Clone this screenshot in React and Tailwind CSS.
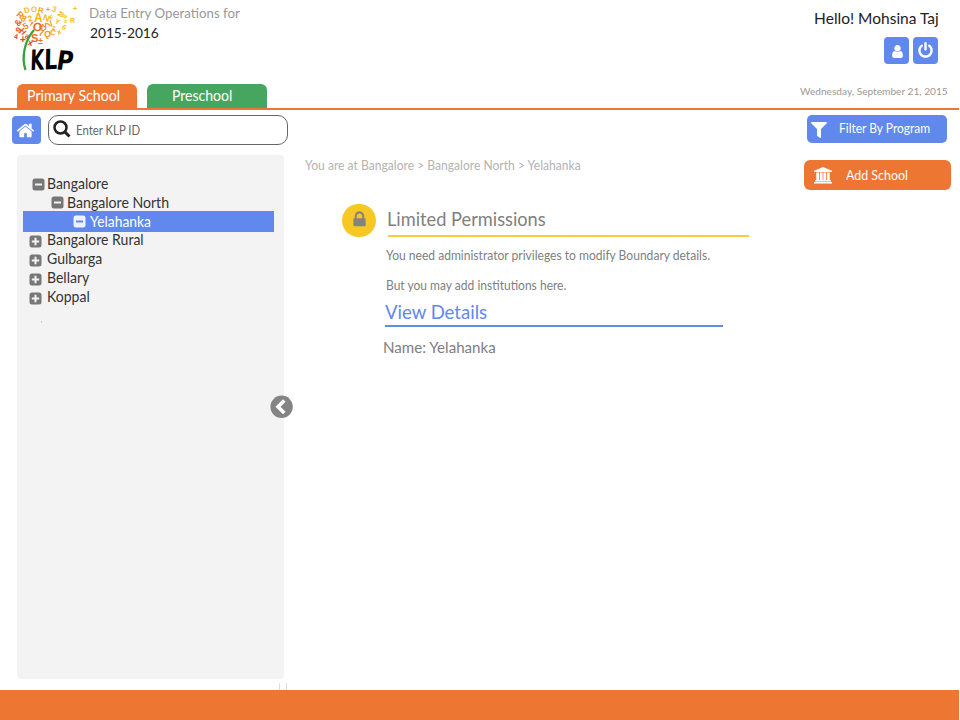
import React from "react";
import { FaFilter } from "react-icons/fa";

const HOME = "M1472 992v480q0 26-19 45t-45 19h-384v-384h-256v384h-384q-26 0-45-19t-19-45v-480q0-1 .5-3t.5-3l575-474 575 474q1 2 1 6zm223-69l-62 74q-8 9-21 11h-3q-13 0-21-7l-692-577-692 577q-12 8-24 7-13-2-21-11l-62-74q-8-10-7-23.5t11-21.5l719-599q32-26 76-26t76 26l244 204v-195q0-14 9-23t23-9h192q14 0 23 9t9 23v408l219 182q10 8 11 21.5t-7 23.5z";
const USER = "M1536 1399q0 109-62.5 187t-150.5 78h-854q-88 0-150.5-78t-62.5-187q0-85 8.5-160.5t31.5-152 58.5-131 94-89 134.5-34.5q131 128 313 128t313-128q76 0 134.5 34.5t94 89 58.5 131 31.5 152 8.5 160.5zm-256-887q0 159-112.5 271.5t-271.5 112.5-271.5-112.5-112.5-271.5 112.5-271.5 271.5-112.5 271.5 112.5 112.5 271.5z";
const LOCK = "M640 768h512v-192q0-106-75-181t-181-75-181 75-75 181v192zm832 96v576q0 40-28 68t-68 28h-960q-40 0-68-28t-28-68v-576q0-40 28-68t68-28h32v-192q0-184 132-316t316-132 316 132 132 316v192h32q40 0 68 28t28 68z";
const POWER = "M1664 896q0 156-61 298t-164 245-245 164-298 61-298-61-245-164-164-245-61-298q0-182 80.5-343t226.5-270q43-32 95.5-25t83.5 50q32 42 24.5 94.5t-49.5 84.5q-98 74-151.5 181t-53.5 228q0 104 40.5 198.5t109.5 163.5 163.5 109.5 198.5 40.5 198.5-40.5 163.5-109.5 109.5-163.5 40.5-198.5q0-121-53.5-228t-151.5-181q-42-32-49.5-84.5t24.5-94.5q31-43 84-50t95 25q146 109 226.5 270t80.5 343zm-640-768v640q0 52-38 90t-90 38-90-38-38-90v-640q0-52 38-90t90-38 90 38 38 90z";

function Glyph({ d, size, className = "" }) {
  return (
    <svg width={size} height={size} viewBox="0 0 1792 1792" fill="currentColor" className={`shrink-0 ${className}`}>
      <path d={d} />
    </svg>
  );
}

// Dandelion seeds: [character, x, y, size, rotation, colour]
const seeds = [
  ["D", 24, 13, 8, -15, "#f5b81c"], ["O", 31, 12, 8, 10, "#f6c41e"], ["R", 38, 13, 8, 10, "#f0a81c"],
  ["+", 46, 12, 7, 0, "#f0a020"], ["3", 52, 12, 8, 20, "#f6c41e"], ["+", 73, 11, 7, 0, "#f6c41e"],
  ["A", 34, 22, 12, 0, "#f8b010"], ["O", 33, 31, 12, 10, "#ee6a20"], ["S", 31, 42, 11, 0, "#ee6a28"],
  ["±", 38, 44, 9, 0, "#ee7428"], ["x", 28, 46, 9, 15, "#e2452a"], ["R", 17, 18, 9, 40, "#f08a28"],
  ["&", 15, 26, 9, -60, "#ee5a28"], ["9", 16, 33, 9, -40, "#e8562a"], ["+", 20, 43, 10, 0, "#e2452a"],
  ["8", 21, 22, 9, 30, "#f09a20"], ["5", 23, 29, 9, -30, "#f08a28"], ["H", 20, 34, 8, 50, "#e8562a"],
  ["a", 25, 39, 8, 20, "#e8562a"], ["4", 14, 39, 7, 10, "#e2452a"], ["N", 43, 21, 9, 20, "#f5b81c"],
  ["y", 42, 28, 9, -20, "#f08a28"], ["V", 47, 27, 9, -40, "#f5a81c"], ["k", 49, 20, 7, 30, "#f6c41e"],
  ["Q", 44, 37, 9, 20, "#f09a20"], ["7", 39, 36, 9, 15, "#ee7428"], ["C", 50, 35, 8, 20, "#f5a81c"],
  ["e", 39, 29, 8, 0, "#ee7428"], ["M", 58, 17, 7, -60, "#f6c41e"], ["w", 62, 18, 7, 30, "#f6c41e"],
  ["R", 70, 23, 7, 0, "#f6c41e"], ["Y", 55, 24, 7, 30, "#f5b81c"], ["s", 64, 23, 6, 20, "#f6c41e"],
  ["6", 62, 30, 7, 30, "#f5b81c"], ["x", 57, 34, 7, -20, "#f5a81c"], ["z", 52, 30, 7, 10, "#f5a81c"],
  ["2", 28, 21, 8, -20, "#f5a81c"], ["f", 30, 27, 7, 30, "#f08a28"],
];

function Logo() {
  return (
    <svg width="80" height="78" viewBox="0 0 80 78" className="shrink-0">
      <g fontFamily="Liberation Sans, sans-serif" fontWeight="700">
        {seeds.map(([c, x, y, s, r, fill], i) => (
          <text key={i} x={x} y={y} fontSize={s} fill={fill} transform={`rotate(${r} ${x + s / 3} ${y - s / 3})`}>{c}</text>
        ))}
      </g>
      <path d="M25.500 70C21 57 25 40 34 30" fill="none" stroke="#35a535" strokeWidth="2.300" />
      <g fontFamily="DejaVu Sans, sans-serif" fontWeight="700" fontSize="28" fill="#000">
        <text transform="translate(30 70) rotate(-2) skewX(-4) scale(.63 1)">K</text>
        <text transform="translate(44 69.500) rotate(-3) skewX(-4) scale(.74 1)">L</text>
        <text transform="translate(55.500 69.500) rotate(3) skewX(-6) scale(.8 .95)">P</text>
      </g>
    </svg>
  );
}

// One line of text, condensed horizontally from its left edge
function Line({ className = "", children }) {
  return <div className={`origin-left whitespace-nowrap ${className}`}>{children}</div>;
}

function ToggleIcon({ open, active, className = "" }) {
  return (
    <svg width="13" height="13" viewBox="0 0 13 13" className={`shrink-0 ${className}`}>
      <rect x=".5" y=".5" width="12" height="12" rx="2.500" fill={active ? "#eef2fd" : "#777"} />
      <path d={open ? "M3 6.500H10" : "M2.800 6.500H10.200M6.500 2.800V10.200"} stroke={active ? "#6188ec" : "#f3f3f3"} strokeWidth="2" />
    </svg>
  );
}

function Institution() {
  return (
    <svg width="18" height="17" viewBox="0 0 18 17" fill="#fff" className="shrink-0">
      <path d="M9 0L18 3.700V5H0V3.700ZM2.300 5.500H5.200V13H2.300ZM6 5.500H8.600V13H6ZM9.400 5.500H12V13H9.400ZM12.800 5.500H15.700V13H12.800ZM1.200 13H16.800V14.500H1.200ZM0 15H18V16.600H0Z" />
    </svg>
  );
}

const districts = ["Bangalore Rural", "Gulbarga", "Bellary", "Koppal"];

export default function App() {
  return (
    <div className="flex h-[720px] w-[960px] flex-col overflow-hidden bg-white font-['Lato','Liberation_Sans',sans-serif]">
      <header className="flex h-[110px] w-[959px] shrink-0 flex-col border-b-2 border-[#ed7633]">
        <div className="flex h-[84px] justify-between">
          <div className="flex">
            <Logo />
            <div className="ml-[9px] pt-[3px]">
              <Line className="h-5 scale-x-[.949] text-[14px] leading-5 text-[#999]">Data Entry Operations for</Line>
              <Line className="ml-px h-5 scale-x-[.98] text-[14px] leading-5 text-[#222]">2015-2016</Line>
            </div>
          </div>
          <div className="mr-[20px] flex flex-col items-end pt-2">
            <div className="origin-right scale-x-[.968] whitespace-nowrap text-[16px] leading-5 text-[#222]">Hello! Mohsina Taj</div>
            <div className="mr-px mt-[9px] flex gap-1">
              <button className="flex h-[27px] w-[25px] items-center justify-center rounded bg-[#6188ec] pl-[2px] pt-[2px] text-white"><Glyph d={USER} size={15} /></button>
              <button className="flex h-[27px] w-[25px] items-center justify-center rounded bg-[#6188ec] text-white"><Glyph d={POWER} size={17} /></button>
            </div>
          </div>
        </div>
        <nav className="flex h-6">
          <div className="ml-[17px] h-6 w-[120px] rounded-t-md bg-[#ed7633] pl-[10px]">
            <Line className="scale-x-[.945] text-[15px] leading-[23px] text-white">Primary School</Line>
          </div>
          <div className="ml-[10px] h-6 w-[120px] rounded-t-md bg-[#46a65f] pl-[25px]">
            <Line className="scale-x-[.935] text-[15px] leading-[23px] text-white">Preschool</Line>
          </div>
          <div className="ml-auto mr-[11px] origin-right scale-x-[1.014] whitespace-nowrap text-[10px] leading-[15px] text-[#999]">Wednesday, September 21, 2015</div>
        </nav>
      </header>

      <div className="flex h-[580px]">
        <aside className="flex w-[288px] shrink-0 flex-col">
          <div className="flex pl-3 pt-[5px]">
            <button className="mt-px flex h-[28px] w-[29px] items-center justify-center rounded bg-[#6188ec] pr-[2px] text-white"><Glyph d={HOME} size={19} /></button>
            <div className="ml-[7px] flex h-[30px] w-[240px] items-center rounded-[10px] border border-[#666] pl-1 text-[#222]">
              <svg width="18" height="18" viewBox="0 0 18 18" className="-mt-[3px] shrink-0" fill="none" stroke="#222">
                <circle cx="7.500" cy="7.500" r="6" strokeWidth="2.500" />
                <path d="M12 12L16.500 16.500" strokeWidth="3" />
              </svg>
              <Line className="ml-[5px] mt-px scale-x-[.875] text-[13px] text-[#666]">Enter KLP ID</Line>
            </div>
          </div>
          <div className="relative ml-[17px] mt-[10px] h-[524px] w-[267px] rounded bg-[#f3f3f3] pt-5 text-[15px] leading-[19px] text-[#333]">
            <div className="flex h-[18px] items-center pl-[15px]">
              <ToggleIcon open className="mt-px" />
              <Line className="-mt-[2px] ml-[2px] scale-x-[.932]">Bangalore</Line>
            </div>
            <div className="flex h-[18px] items-center pl-[34px]">
              <ToggleIcon open />
              <Line className="ml-[3px] scale-x-[.94]">Bangalore North</Line>
            </div>
            <div className="ml-[6px] flex h-[21px] w-[251px] items-center bg-[#6188ec] pl-[50px] text-white">
              <ToggleIcon open active />
              <Line className="ml-[4px] scale-x-[.925]">Yelahanka</Line>
            </div>
            <div className="-mt-[2px]">
              {districts.map((name) => (
                <div key={name} className="flex h-[19px] items-center pl-[12px]">
                  <ToggleIcon className="mt-[4px]" />
                  <Line className="ml-[5px] scale-x-[.935]">{name}</Line>
                </div>
              ))}
            </div>
            <div className="ml-6 mt-[15px] h-[2px] w-px bg-[#ccc]" />
            <svg width="24" height="24" viewBox="0 0 24 24" className="absolute left-[253px] top-[240px]">
              <circle cx="11.600" cy="11.800" r="11.200" fill="#848484" />
              <path d="M14.300 5.500L8 11.800L14.300 18.100" fill="none" stroke="#fff" strokeWidth="3.600" />
            </svg>
          </div>
          <div className="ml-[279px] mt-1 h-[7px] w-[8px] border-x border-[#ddd]" />
        </aside>

        <main className="flex-1 pl-[17px] pt-[46px] text-[#808080]">
          <Line className="h-5 scale-x-[.931] text-[13px] leading-[19px] text-[#b3b3b3]">You are at Bangalore &gt; Bangalore North &gt; Yelahanka</Line>
          <div className="flex pl-[37px] pt-7">
            <div className="flex h-[33px] w-[34px] items-center justify-center rounded-full bg-[#f7c824] pb-[2px] text-[#85837d]"><Glyph d={LOCK} size={19} /></div>
            <div className="ml-[12px] h-[33px] w-[361px] border-b-2 border-[#fdcb43]">
              <Line className="-ml-px scale-x-[.959] text-[19px] leading-[29px]">Limited Permissions</Line>
            </div>
          </div>
          <div className="ml-[81px] mt-[8px] h-[30px]"><Line className="scale-x-[.928] text-[13px] leading-5">You need administrator privileges to modify Boundary details.</Line></div>
          <div className="ml-[81px] h-[20px]"><Line className="scale-x-[.926] text-[13px] leading-5">But you may add institutions here.</Line></div>
          <div className="ml-[80px] mt-[5px] h-[27px] w-[338px] border-b-2 border-[#5f8bea]">
            <Line className="scale-x-[.976] text-[19px] leading-[23px] text-[#6188ec]">View Details</Line>
          </div>
          <Line className="ml-[78px] mt-[10px] scale-x-[.945] text-[16px] leading-5">Name: Yelahanka</Line>
        </main>

        <div className="w-[156px] shrink-0 pt-[5px] text-[13px] text-white">
          <button className="ml-[3px] flex h-[28px] w-[140px] items-center rounded-[5px] bg-[#6188ec] pl-1">
            <FaFilter size={16} className="mt-[2px]" />
            <Line className="ml-[12px] scale-x-[.923]">Filter By Program</Line>
          </button>
          <button className="mt-[17px] flex h-[30px] w-[147px] items-center rounded-md bg-[#ed7633] pl-[10px]">
            <Institution />
            <Line className="ml-[14px] mt-px scale-x-[.955]">Add School</Line>
          </button>
        </div>
      </div>
      <footer className="h-[30px] w-[959px] shrink-0 bg-[#ed7633]" />
    </div>
  );
}
